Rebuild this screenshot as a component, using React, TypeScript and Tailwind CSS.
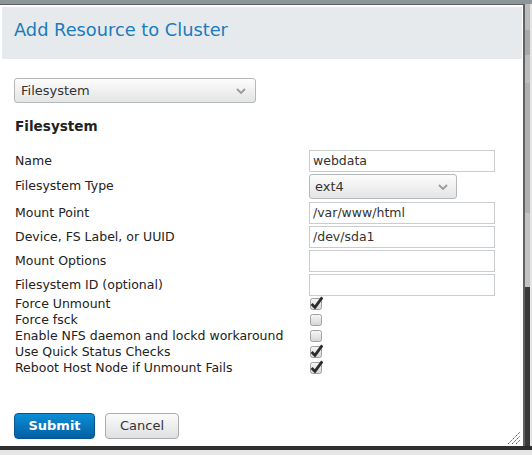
import React from 'react';

const font = { fontFamily: '"DejaVu Sans", Verdana, sans-serif' };

const Chevron = () => (
  <svg width="10" height="6" viewBox="0 0 10 6" className="shrink-0">
    <polyline points="1,1 5,5 9,1" fill="none" stroke="#9a9a9a" strokeWidth="1.8" />
  </svg>
);

const Select = ({ value, className }: { value: string; className: string }) => (
  <div
    className={`flex items-center justify-between rounded-[3px] border border-[#b5b8ba] bg-gradient-to-b from-[#fdfdfd] to-[#e3e4e5] text-[13px] text-[#333] ${className}`}
  >
    <span>{value}</span>
    <Chevron />
  </div>
);

const Input = ({ value }: { value?: string }) => (
  <div className="flex h-[22px] w-[186px] items-center border border-[#c9cdd0] bg-white pl-[3px] text-[12.5px] text-[#333]">
    {value}
  </div>
);

const Check = ({ checked }: { checked: boolean }) => (
  <svg width="16" height="15" viewBox="0 0 16 15" className="shrink-0">
    <defs>
      <linearGradient id="cbg" x1="0" y1="0" x2="0" y2="1">
        <stop offset="0" stopColor="#f6f6f6" />
        <stop offset="1" stopColor="#d6d6d6" />
      </linearGradient>
    </defs>
    <rect x="1.5" y="2.5" width="11" height="11" rx="2" fill="url(#cbg)" stroke="#9ea2a5" />
    {checked && (
      <path d="M2.6 8 L6 11.4 L13.2 1.4" fill="none" stroke="#2a2c2e" strokeWidth="2.8" strokeLinejoin="miter" />
    )}
  </svg>
);

const rows: [string, React.ReactNode, string][] = [
  ['Name', <Input value="webdata" />, 'mb-[2px]'],
  ['Filesystem Type', <Select value="ext4" className="h-[25px] w-[148px] pl-[5px] pr-[8px]" />, 'mb-[3px]'],
  ['Mount Point', <Input value="/var/www/html" />, 'mb-[2px]'],
  ['Device, FS Label, or UUID', <Input value="/dev/sda1" />, 'mb-[2px]'],
  ['Mount Options', <Input />, 'mb-[2px]'],
  ['Filesystem ID (optional)', <Input />, ''],
];

const checks: [string, boolean][] = [
  ['Force Unmount', true],
  ['Force fsck', false],
  ['Enable NFS daemon and lockd workaround', false],
  ['Use Quick Status Checks', true],
  ['Reboot Host Node if Unmount Fails', true],
];

export default function App() {
  return (
    <div className="flex h-[455px] w-[532px] flex-col overflow-hidden bg-[#e4e4e4]" style={font}>
      <div className="h-[4px] bg-[#8d9598]" />
      <div className="flex">
        <div className="relative h-[442px] w-[525px] border-r-2 border-t border-[#5f6366] bg-white pl-[2px] pr-[1px] pt-[2px]">
          <div className="h-[52px] bg-[#e6eaed] pl-[12px] pt-[11px]">
            <h1 className="text-[17.8px] leading-[24px] text-[#1a7bbd]">Add Resource to Cluster</h1>
          </div>
          <div className="pl-[12px] pr-[12px]">
            <Select value="Filesystem" className="mt-[19px] h-[25px] w-[242px] pl-[6px] pr-[9px]" />
            <h2 className="mt-[13px] pl-[1px] text-[13.6px] font-bold leading-[20px] text-[#222]">Filesystem</h2>
            <div className="mt-[14px]">
              {rows.map(([label, field, mb]) => (
                <div key={label} className={`flex items-center ${mb}`}>
                  <div className="w-[295px] pl-[1px] text-[12.5px] text-[#222]">{label}</div>
                  {field}
                </div>
              ))}
              {checks.map(([label, c]) => (
                <div key={label} className="flex h-[16px] items-center">
                  <div className="w-[295px] pl-[1px] text-[12.5px] leading-[16px] text-[#222]">{label}</div>
                  <div className="-mt-[2px]">
                    <Check checked={c} />
                  </div>
                </div>
              ))}
            </div>
            <div className="mt-[37px] flex gap-[10px]">
              <button className="h-[26px] w-[81px] rounded-[4px] border border-[#04558f] bg-gradient-to-b from-[#0b8fd6] to-[#045fa3] text-[13px] font-bold text-white">
                Submit
              </button>
              <button className="h-[26px] w-[74px] rounded-[4px] border border-[#a9adb0] bg-gradient-to-b from-[#fbfbfb] to-[#dfe0e1] text-[13px] text-[#333]">
                Cancel
              </button>
            </div>
          </div>
          <svg width="14" height="14" viewBox="0 0 14 14" className="absolute bottom-[1px] right-[2px]">
            <line x1="1" y1="13" x2="13" y2="1" stroke="#555" strokeWidth="1" strokeDasharray="1.5 0.8" />
            <line x1="5" y1="13" x2="13" y2="5" stroke="#555" strokeWidth="1" strokeDasharray="1.5 0.8" />
            <line x1="9" y1="13" x2="13" y2="9" stroke="#555" strokeWidth="1" strokeDasharray="1.5 0.8" />
          </svg>
        </div>
        <div className="flex w-[5px] flex-col">
          <div className="h-[26px] bg-[#bcbcbc]" />
          <div className="h-[25px] bg-[#a9a9a9]" />
          <div className="h-[28px] bg-[#bdbdbd]" />
          <div className="h-[130px] bg-[#b0b0b0]" />
          <div className="h-[74px] bg-[#c2c2c2]" />
          <div className="flex-1 bg-[#3a3a3a]" />
        </div>
      </div>
      <div className="h-[4px] bg-[#2f2f2f]" />
      <div className="flex-1 bg-[#e6e6e6]" />
    </div>
  );
}
